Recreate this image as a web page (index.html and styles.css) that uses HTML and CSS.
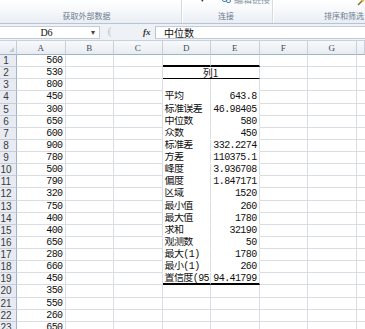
FILE: index.html
```html
<!DOCTYPE html>
<html lang="zh-CN">
  <head>
    <meta charset="UTF-8" />
    <meta name="viewport" content="width=device-width, initial-scale=1.0" />
    <title>描述统计</title>
    <link rel="stylesheet" href="styles.css">
  </head>
  <body>
    <div class="ribbon">
      <div class="group group-data">
        <div class="group-top"><span class="tick">'</span></div>
        <div class="group-label">获取外部数据</div>
      </div>
      <div class="group group-conn">
        <div class="group-top">
          <span class="drop">▾</span>
          <svg class="link-icon" width="9" height="6" viewBox="0 0 9 6">
            <rect x="0.5" y="0.5" width="4" height="3" rx="1.5" fill="none" stroke="#4a7fb8" />
            <rect x="4.5" y="1.5" width="4" height="3" rx="1.5" fill="none" stroke="#4a7fb8" />
          </svg>
          <span class="cut-text">编辑链接</span>
        </div>
        <div class="group-label">连接</div>
      </div>
      <div class="group group-sort">
        <div class="group-top">
          <svg class="pen-icon" width="8" height="6" viewBox="0 0 8 6">
            <path d="M1 5 L6 0" stroke="#8a6a1e" stroke-width="1.5" />
            <path d="M5 1 L7 0" stroke="#e8b830" stroke-width="2" />
          </svg>
        </div>
        <div class="group-label">排序和筛选</div>
      </div>
    </div>

    <div class="formula-bar">
      <div class="name-box">
        <span class="name-text">D6</span>
        <span class="name-arrow">▾</span>
      </div>
      <div class="fb-buttons">
        <svg width="12" height="12" viewBox="0 0 12 12">
          <path d="M9 1.5 A5 5 0 0 0 9 10.5" fill="none" stroke="#b8c2cf" />
          <path d="M6 5 H9 M6 7 H9" stroke="#d0d6de" />
        </svg>
      </div>
      <div class="fx">fx</div>
      <div class="formula-input">中位数</div>
    </div>

    <div class="sheet" id="sheet"></div>

    <script>
      const colA = [560, 530, 800, 450, 300, 650, 600, 900, 780, 500, 790, 320,
        750, 400, 400, 650, 280, 660, 450, 350, 550, 260, 650];

      const stats = {
        4: ["平均", "643.8"],
        5: ["标准误差", "46.98405"],
        6: ["中位数", "580"],
        7: ["众数", "450"],
        8: ["标准差", "332.2274"],
        9: ["方差", "110375.1"],
        10: ["峰度", "3.936708"],
        11: ["偏度", "1.847171"],
        12: ["区域", "1520"],
        13: ["最小值", "260"],
        14: ["最大值", "1780"],
        15: ["求和", "32190"],
        16: ["观测数", "50"],
        17: ["最大(1)", "1780"],
        18: ["最小(1)", "260"],
        19: ["置信度(95", "94.41799"],
      };

      const sheet = document.getElementById("sheet");
      const letters = ["A", "B", "C", "D", "E", "F", "G", ""];

      function cell(cls, text) {
        const div = document.createElement("div");
        div.className = "cell " + cls;
        if (text !== undefined) div.textContent = text;
        sheet.appendChild(div);
        return div;
      }

      // header row
      cell("corner");
      letters.forEach((l) => cell("colhead", l));

      for (let r = 1; r <= 23; r++) {
        cell("rowhead", r);
        cell("num", colA[r - 1]);
        cell("");
        cell("");

        if (r === 2) {
          cell("stat merged", "列1");
        } else {
          let extra = "";
          if (r === 1) extra = " rule-thick";
          else if (r === 19) extra = " rule-thick";
          else if (r <= 18) extra = " no-line";

          const s = stats[r];
          cell("stat stat-label" + extra, s ? s[0] : "");
          cell("stat num" + extra, s ? s[1] : "");
        }

        cell("");
        cell("");
        cell("last");
      }
    </script>
  </body>
</html>
```

FILE: styles.css
```css
body {
  margin: 0;
  padding: 0;
  width: 365px;
  height: 329px;
  overflow: hidden;
  background-color: #ffffff;
  font-family: "Liberation Sans", "Noto Sans CJK SC", sans-serif;
}

/* ribbon */
.ribbon {
  display: flex;
  height: 23px;
  background: linear-gradient(#ffffff, #f6f8fb 45%, #e9eef4);
  border-bottom: 1px solid #b8c4d2;
  overflow: hidden;
}

.group {
  display: flex;
  flex-direction: column;
  flex-shrink: 0;
  border-right: 1px solid #d3dbe5;
  box-shadow: 1px 0 0 #ffffff;
}

.group-data {
  width: 181px;
}

.group-conn {
  width: 90px;
}

.group-sort {
  width: 140px;
  border-right: none;
}

.group-top {
  position: relative;
  height: 10px;
  overflow: hidden;
}

.group-label {
  text-align: center;
  font-family: "Noto Sans CJK SC", sans-serif;
  font-size: 8px;
  line-height: 11px;
  color: #6e7c8e;
}

.group-data .group-label {
  padding-right: 8px;
}

.group-conn .group-label {
  padding-right: 2px;
}

.group-sort .group-label {
  padding-left: 2px;
}

.tick {
  position: absolute;
  left: 113px;
  top: -3px;
  font-size: 7px;
  color: #9aa3ae;
}

.drop {
  position: absolute;
  left: 18px;
  top: -6px;
  font-size: 9px;
  color: #222;
}

.link-icon {
  position: absolute;
  left: 40px;
  top: -2px;
}

.cut-text {
  position: absolute;
  left: 52px;
  top: -7px;
  font-family: "Noto Sans CJK SC", sans-serif;
  font-size: 9px;
  color: #8a96a6;
}

.pen-icon {
  position: absolute;
  left: 84px;
  top: 0;
}

/* formula bar */
.formula-bar {
  display: flex;
  align-items: center;
  height: 17px;
  background-color: #eef2f6;
  border-bottom: 1px solid #c9d2dc;
  box-sizing: border-box;
}

.name-box {
  display: flex;
  align-items: center;
  width: 100px;
  height: 13px;
  background-color: #ffffff;
  border: 1px solid #c2ccd8;
  border-left: none;
  box-sizing: border-box;
}

.name-text {
  flex: 1;
  text-align: center;
  padding-left: 2px;
  font-family: "Liberation Serif", serif;
  font-size: 10px;
  color: #111;
}

.name-arrow {
  width: 8px;
  font-size: 8px;
  color: #444;
}

.fb-buttons {
  display: flex;
  align-items: center;
  width: 41px;
  padding-left: 2px;
}

.fx {
  width: 12px;
  font-family: "Liberation Serif", serif;
  font-style: italic;
  font-weight: bold;
  font-size: 9px;
  color: #333;
}

.formula-input {
  flex: 1;
  height: 13px;
  padding-left: 8px;
  background-color: #ffffff;
  border-left: 1px solid #b9c4d0;
  border-top: 1px solid #c2ccd8;
  border-bottom: 1px solid #c2ccd8;
  box-sizing: border-box;
  font-family: "Noto Sans CJK SC", sans-serif;
  font-size: 10px;
  line-height: 11px;
  color: #111;
}

/* sheet */
.sheet {
  display: grid;
  grid-template-columns: 17px repeat(7, 48.53px) 1fr;
  grid-template-rows: 14px;
  grid-auto-rows: 12.14px;
}

.cell {
  box-sizing: border-box;
  border-right: 1px solid #dadde1;
  border-bottom: 1px solid #dadde1;
  white-space: nowrap;
  font-family: "Liberation Mono", "Noto Sans CJK SC", monospace;
  font-size: 10px;
  letter-spacing: -0.6px;
  line-height: 12px;
  color: #111;
}

.corner {
  position: relative;
  background: linear-gradient(#f6f8fb, #e6ebf1);
  border-right: 1px solid #c3ccd7;
  border-bottom: 1px solid #9fb3c9;
}

.corner::after {
  content: "";
  position: absolute;
  right: 2px;
  bottom: 2px;
  border-left: 5px solid transparent;
  border-bottom: 5px solid #c6ccd4;
}

.colhead {
  background: linear-gradient(#f8f9fb, #e8ecf1);
  border-right: 1px solid #c8cfd8;
  border-bottom: 1px solid #9fb3c9;
  text-align: center;
  font-family: "Liberation Serif", serif;
  font-size: 9px;
  letter-spacing: 0;
  line-height: 14px;
  color: #3e4d5f;
}

.rowhead {
  background-color: #e8ecf2;
  border-right: 1px solid #9fb3c9;
  border-bottom: 1px solid #c5cdd8;
  padding-right: 4px;
  text-align: center;
  font-family: "Liberation Sans", sans-serif;
  font-size: 10px;
  letter-spacing: 0;
  color: #3b3b3b;
}

.num {
  text-align: right;
  padding-right: 2px;
}

.stat-label {
  padding-left: 2px;
  overflow: hidden;
}

.merged {
  grid-column: span 2;
  text-align: center;
  border-bottom: 1px solid #000;
  font-family: "Noto Sans CJK SC", sans-serif;
  letter-spacing: 0;
}

.no-line {
  border-bottom-color: transparent;
}

.rule-thick {
  border-bottom: 2px solid #000;
}

.last {
  border-right: none;
}
```
